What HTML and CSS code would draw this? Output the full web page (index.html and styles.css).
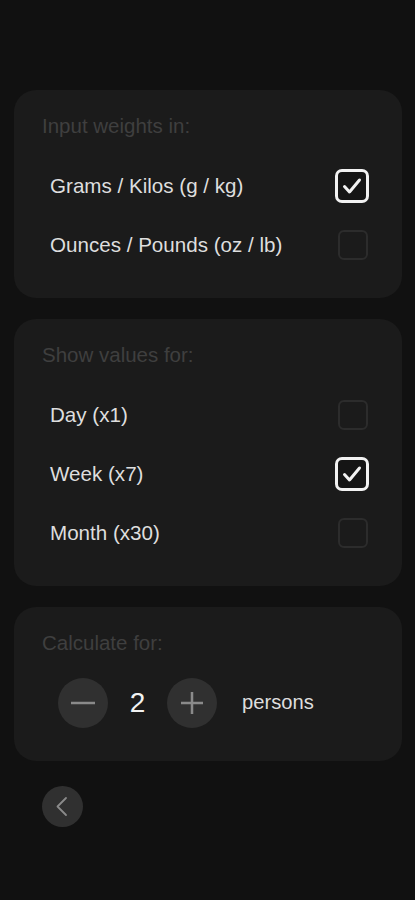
FILE: index.html
```html
<!DOCTYPE html>
<html lang="en">

<head>
   <meta charset="UTF-8">
   <meta name="viewport" content="width=device-width, initial-scale=1.0">
   <title>Settings</title>
   <link rel="stylesheet" href="styles.css">
</head>

<body>
   <div class="container">

      <div class="card">
         <div class="card-title">Input weights in:</div>
         <div class="option">
            <span class="option-label">Grams / Kilos (g / kg)</span>
            <span class="check checked">
               <svg viewBox="0 0 34 34" width="34" height="34"><path d="M9.5 17.5 L14.5 23 L24.5 11" /></svg>
            </span>
         </div>
         <div class="option">
            <span class="option-label">Ounces / Pounds (oz / lb)</span>
            <span class="check"></span>
         </div>
      </div>

      <div class="card">
         <div class="card-title">Show values for:</div>
         <div class="option">
            <span class="option-label">Day (x1)</span>
            <span class="check"></span>
         </div>
         <div class="option">
            <span class="option-label">Week (x7)</span>
            <span class="check checked">
               <svg viewBox="0 0 34 34" width="34" height="34"><path d="M9.5 17.5 L14.5 23 L24.5 11" /></svg>
            </span>
         </div>
         <div class="option">
            <span class="option-label">Month (x30)</span>
            <span class="check"></span>
         </div>
      </div>

      <div class="card card-last">
         <div class="card-title">Calculate for:</div>
         <div class="stepper">
            <button class="round-btn" aria-label="minus">
               <svg viewBox="0 0 50 50" width="50" height="50"><path d="M13 25 H37" /></svg>
            </button>
            <span class="count">2</span>
            <button class="round-btn" aria-label="plus">
               <svg viewBox="0 0 50 50" width="50" height="50"><path d="M14 25 H36 M25 14 V36" /></svg>
            </button>
            <span class="unit">persons</span>
         </div>
      </div>

      <button class="back-btn" aria-label="back">
         <svg viewBox="0 0 41 41" width="41" height="41"><path d="M24 12 L15.5 20.5 L24 29" /></svg>
      </button>

   </div>
</body>

</html>
```

FILE: styles.css
```css
body {
   margin: 0;
   background: #111111;
   font-family: "Liberation Sans", Arial, sans-serif;
   color: #e2e2e2;
}

.container {
   padding: 90px 13px 40px 14px;
   display: flex;
   flex-direction: column;
   gap: 21px;
}

.card {
   background: #1b1b1b;
   border-radius: 22px;
   padding: 24px 33px 24px 0;
}

.card-last {
   padding-bottom: 29px;
}

.card-title {
   padding-left: 28px;
   height: 24px;
   line-height: 24px;
   font-size: 20.5px;
   color: #3f3f3f;
   margin-bottom: 18px;
}

.option {
   display: flex;
   align-items: center;
   justify-content: space-between;
   height: 59px;
   padding-left: 36px;
}

.option-label {
   font-size: 20.6px;
   color: #dedede;
}

.check {
   width: 30px;
   height: 30px;
   box-sizing: border-box;
   border: 2px solid #2c2c2c;
   border-radius: 6px;
   margin-right: 1px;
}

.check.checked {
   width: 34px;
   height: 34px;
   margin-right: 0;
   border: 3px solid #f2f2f2;
   border-radius: 7px;
   background: #151515;
   position: relative;
}

.check.checked svg {
   position: absolute;
   top: -3px;
   left: -3px;
}

.check svg path {
   fill: none;
   stroke: #f2f2f2;
   stroke-width: 3;
   stroke-linecap: round;
   stroke-linejoin: round;
}

.stepper {
   display: flex;
   align-items: center;
   height: 59px;
   padding-left: 44px;
}

.round-btn {
   width: 50px;
   height: 50px;
   padding: 0;
   border: none;
   border-radius: 50%;
   background: #303030;
   display: block;
}

.round-btn svg {
   display: block;
}

.round-btn svg path {
   fill: none;
   stroke: #8a8a8a;
   stroke-width: 2.5;
}

.count {
   width: 59px;
   text-align: center;
   font-size: 28px;
   color: #f2f2f2;
}

.unit {
   margin-left: 25px;
   font-size: 20.2px;
   color: #dedede;
}

.back-btn {
   margin-top: 4px;
   margin-left: 28px;
   width: 41px;
   height: 41px;
   padding: 0;
   border: none;
   border-radius: 50%;
   background: #303030;
}

.back-btn svg {
   display: block;
}

.back-btn svg path {
   fill: none;
   stroke: #8a8a8a;
   stroke-width: 1.8;
   stroke-linecap: round;
   stroke-linejoin: round;
}
```
